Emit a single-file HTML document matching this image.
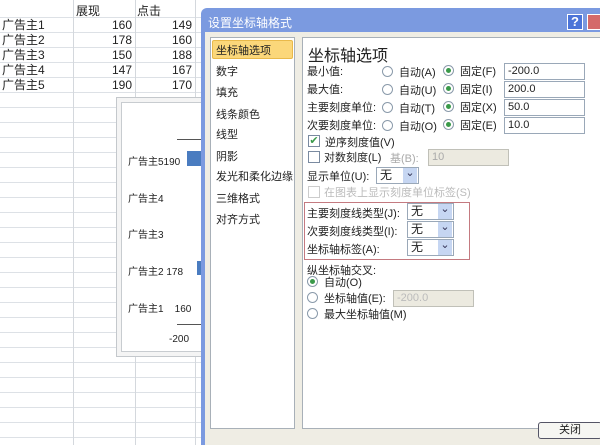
<!DOCTYPE html><html><head><meta charset="utf-8"><style>
*{margin:0;padding:0;box-sizing:border-box}
body{width:600px;height:445px;overflow:hidden;background:#fff;font-family:"Liberation Sans","Noto Sans CJK SC",sans-serif;font-size:11px;color:#222;position:relative}
.a{position:absolute;white-space:nowrap}
.hl{position:absolute;left:0;width:600px;height:1px;background:#dde1e6}
.vl{position:absolute;top:0;width:1px;height:445px;background:#d4d8dd}
.r{position:absolute;width:11px;height:11px;border:1px solid #8a9aaa;border-radius:50%;background:#fff}
.r.on::after{content:"";position:absolute;left:2px;top:2px;width:5px;height:5px;border-radius:50%;background:#3a9a4a}
.cb{position:absolute;width:12px;height:12px;border:1px solid #7a8aa0;background:#fff}
.in{position:absolute;height:17px;border:1px solid #9aa8b8;background:#fff;padding-left:3px;line-height:15px;font-size:11px}
.sel{position:absolute;width:47px;height:17px;border:1px solid #9aa8b8;background:#fff;padding-left:3px;line-height:15px;font-size:12px}
.sel::after{content:"⌄";position:absolute;right:1px;top:0;width:14px;height:15px;background:#c6d6f2;color:#335;font-size:11px;text-align:center;line-height:10px}
.li{position:absolute;left:216px;font-size:11px}
</style></head><body>
<div class="hl" style="top:17px"></div><div class="hl" style="top:32px"></div><div class="hl" style="top:47px"></div><div class="hl" style="top:62px"></div><div class="hl" style="top:77px"></div><div class="hl" style="top:92px"></div>
<div class="hl" style="top:107px"></div><div class="hl" style="top:122px"></div><div class="hl" style="top:137px"></div><div class="hl" style="top:152px"></div><div class="hl" style="top:167px"></div><div class="hl" style="top:182px"></div><div class="hl" style="top:197px"></div><div class="hl" style="top:212px"></div><div class="hl" style="top:227px"></div><div class="hl" style="top:242px"></div><div class="hl" style="top:257px"></div><div class="hl" style="top:272px"></div><div class="hl" style="top:287px"></div><div class="hl" style="top:302px"></div><div class="hl" style="top:317px"></div><div class="hl" style="top:332px"></div><div class="hl" style="top:347px"></div><div class="hl" style="top:362px"></div><div class="hl" style="top:377px"></div><div class="hl" style="top:392px"></div><div class="hl" style="top:407px"></div><div class="hl" style="top:422px"></div><div class="hl" style="top:437px"></div>
<div class="vl" style="left:73px"></div><div class="vl" style="left:135px"></div><div class="vl" style="left:195px"></div>
<div class="a" style="left:76px;top:2px;font-size:12px">展现</div><div class="a" style="left:137px;top:2px;font-size:12px">点击</div>
<div class="a" style="left:2px;top:18px;font-size:12px;line-height:15px">广告主1<br>广告主2<br>广告主3<br>广告主4<br>广告主5</div>
<div class="a" style="left:100px;top:18px;font-size:12px;line-height:15px;text-align:right;width:32px">160<br>178<br>150<br>147<br>190</div>
<div class="a" style="left:160px;top:18px;font-size:12px;line-height:15px;text-align:right;width:32px">149<br>160<br>188<br>167<br>170</div>
<div class="a" style="left:116px;top:97px;width:90px;height:260px;border:1px solid #c4c8cc;background:#f4f4f4"></div>
<div class="a" style="left:121px;top:102px;width:85px;height:250px;border:1px solid #c8ccd0;background:#fff"></div>
<div class="a" style="left:177px;top:139px;width:26px;height:1px;background:#555"></div>
<div class="a" style="left:177px;top:324px;width:26px;height:1px;background:#555"></div>
<div class="a" style="left:187px;top:151px;width:16px;height:15px;background:#4a7cc0"></div>
<div class="a" style="left:197px;top:261px;width:6px;height:14px;background:#4a7cc0"></div>
<div class="a" style="left:128px;top:153px;font-size:10px">广告主5190</div>
<div class="a" style="left:128px;top:190px;font-size:10px">广告主4</div>
<div class="a" style="left:128px;top:226px;font-size:10px">广告主3</div>
<div class="a" style="left:128px;top:263px;font-size:10px">广告主2 178</div>
<div class="a" style="left:128px;top:300px;font-size:10px">广告主1 &nbsp; &nbsp;160</div>
<div class="a" style="left:169px;top:334px;font-size:10px">-200</div>
<!-- dialog -->
<div class="a" style="left:201px;top:8px;width:400px;height:437px;background:#7b9ae0;border-radius:6px 0 0 0"></div>
<div class="a" style="left:205px;top:32px;width:395px;height:413px;background:#efede4"></div>
<div class="a" style="left:208px;top:14px;color:#fff;font-size:12px">设置坐标轴格式</div>
<div class="a" style="left:567px;top:14px;width:16px;height:16px;background:#4c74d8;border:1px solid #fff;color:#fff;font-weight:bold;text-align:center;line-height:14px;font-size:13px">?</div>
<div class="a" style="left:587px;top:14px;width:14px;height:16px;background:#d46a6a;border:1px solid #fff"></div>
<div class="a" style="left:210px;top:37px;width:85px;height:392px;background:#fff;border:1px solid #a8b0b8"></div>
<div class="a" style="left:212px;top:40px;width:81px;height:19px;background:#fbd77a;border:1px solid #e9b94a;border-radius:2px"></div>
<div class="li" style="top:42px">坐标轴选项</div>
<div class="li" style="top:63px">数字</div><div class="li" style="top:84px">填充</div><div class="li" style="top:106px">线条颜色</div><div class="li" style="top:126px">线型</div><div class="li" style="top:148px">阴影</div><div class="li" style="top:168px">发光和柔化边缘</div><div class="li" style="top:190px">三维格式</div><div class="li" style="top:211px">对齐方式</div>
<div class="a" style="left:302px;top:37px;width:300px;height:392px;background:#fff;border:1px solid #a8b0b8"></div>
<div class="a" style="left:308px;top:42px;font-size:16px">坐标轴选项</div>
<div class="a" style="left:307px;top:63px;line-height:18px">最小值:<br>最大值:<br>主要刻度单位:<br>次要刻度单位:</div>
<div class="r" style="left:382px;top:66px"></div><div class="r" style="left:382px;top:84px"></div><div class="r" style="left:382px;top:102px"></div><div class="r" style="left:382px;top:120px"></div>
<div class="a" style="left:399px;top:64px;line-height:18px">自动(A)<br>自动(U)<br>自动(T)<br>自动(O)</div>
<div class="r on" style="left:443px;top:65px"></div><div class="r on" style="left:443px;top:83px"></div><div class="r on" style="left:443px;top:101px"></div><div class="r on" style="left:443px;top:119px"></div>
<div class="a" style="left:460px;top:63px;line-height:18px">固定(F)<br>固定(I)<br>固定(X)<br>固定(E)</div>
<div class="in" style="left:504px;top:63px;width:81px">-200.0</div><div class="in" style="left:504px;top:81px;width:81px">200.0</div><div class="in" style="left:504px;top:99px;width:81px">50.0</div><div class="in" style="left:504px;top:117px;width:81px">10.0</div>
<div class="cb" style="left:308px;top:135px;color:#3a9a4a;font-size:11px;line-height:10px;text-align:center">✔</div><div class="a" style="left:325px;top:134px">逆序刻度值(V)</div>
<div class="cb" style="left:308px;top:151px"></div><div class="a" style="left:324px;top:149px">对数刻度(L)</div><div class="a" style="left:390px;top:150px;color:#aaa">基(B):</div>
<div class="in" style="left:428px;top:149px;width:81px;background:#eceae0;color:#aaa;border-color:#c0c0b8">10</div>
<div class="a" style="left:307px;top:168px">显示单位(U):</div><div class="sel" style="left:376px;top:167px;width:43px">无</div>
<div class="cb" style="left:308px;top:186px;border-color:#ccc"></div><div class="a" style="left:324px;top:184px;color:#bbb">在图表上显示刻度单位标签(S)</div>
<div class="a" style="left:304px;top:202px;width:166px;height:58px;border:1px solid #c47a80"></div>
<div class="a" style="left:307px;top:205px;line-height:18px">主要刻度线类型(J):<br>次要刻度线类型(I):<br>坐标轴标签(A):</div>
<div class="sel" style="left:407px;top:203px">无</div><div class="sel" style="left:407px;top:221px">无</div><div class="sel" style="left:407px;top:239px">无</div>
<div class="a" style="left:307px;top:262px">纵坐标轴交叉:</div>
<div class="r on" style="left:307px;top:276px"></div><div class="a" style="left:324px;top:274px">自动(O)</div>
<div class="r" style="left:307px;top:292px"></div><div class="a" style="left:324px;top:290px">坐标轴值(E):</div>
<div class="in" style="left:393px;top:290px;width:81px;background:#eceae0;color:#bbb;border-color:#c0c0b8">-200.0</div>
<div class="r" style="left:307px;top:308px"></div><div class="a" style="left:324px;top:306px">最大坐标轴值(M)</div>
<div class="a" style="left:538px;top:422px;width:64px;height:17px;border:1px solid #556;border-radius:3px;background:#f6f6f2;text-align:center;line-height:15px">关闭</div>
</body></html>
